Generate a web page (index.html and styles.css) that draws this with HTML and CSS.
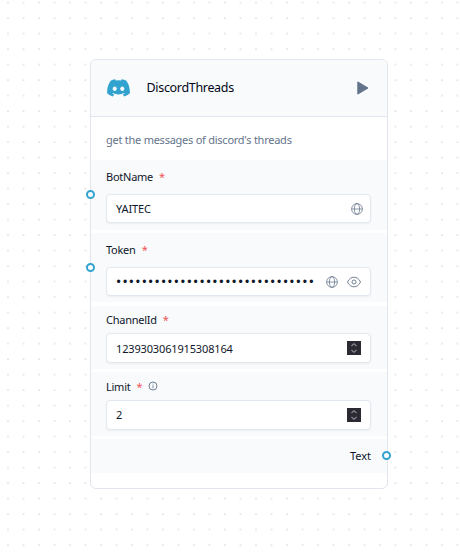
FILE: index.html
```html
<!DOCTYPE html>
<html lang="en">
<head>
<meta charset="utf-8">
<title>DiscordThreads</title>
<link rel="stylesheet" href="styles.css">
</head>
<body>
<svg class="grid" width="460" height="555" aria-hidden="true">
  <defs>
    <pattern id="dots" x="0.25" y="-5.25" width="15.5" height="15.5" patternUnits="userSpaceOnUse"><circle cx="7.75" cy="7.75" r=".53" fill="#999"/></pattern>
    <symbol id="globe" viewBox="0 0 12 12"><g fill="none" stroke="currentColor" stroke-width=".75"><circle cx="6" cy="6" r="5.400"/><ellipse cx="6" cy="6" rx="2.600" ry="5.400"/><path d="M.6 6h10.800"/></g></symbol>
    <symbol id="steps" viewBox="0 0 14 14"><path fill="#2b2a33" d="M0 0h14v14H0z"/><path fill="none" stroke="#8f8f9d" stroke-width="1.1" d="M4.500 5 7 2.700 9.500 5M4.500 9 7 11.300 9.500 9"/></symbol>
  </defs>
  <rect width="460" height="555" fill="url(#dots)"/>
</svg>
<main class="card">
  <header class="head">
    <svg class="logo" viewBox="0 0 24 19"><path fill="#32a3cf" fill-rule="evenodd" d="M20.300 1.800A19 19 0 0 0 15.400.2l-.7 1.300a18 18 0 0 0-5.400 0L8.600.2a19 19 0 0 0-4.900 1.600C.6 6.400-.3 10.900.1 15.400a20 20 0 0 0 6 3l1.300-2.100-2-1 .5-.4a14 14 0 0 0 12.200 0l.5.4-2 1 1.300 2.100a20 20 0 0 0 6-3c.5-5.200-.9-9.700-3.600-13.600zM8 12.700c-1.200 0-2.200-1.100-2.200-2.400S6.800 7.900 8 7.900s2.200 1.100 2.200 2.400-1 2.400-2.200 2.400zm8 0c-1.200 0-2.200-1.100-2.200-2.400s1-2.400 2.200-2.400 2.200 1.100 2.200 2.400-1 2.400-2.200 2.400z"/></svg>
    <h1 class="title">DiscordThreads</h1>
    <svg class="play" viewBox="0 0 12 14"><path fill="#64748b" stroke="#64748b" stroke-linejoin="round" d="M.8.9 11 7 .8 13.100z"/></svg>
  </header>
  <p class="desc"><span class="t-desc">get the messages of discord's threads</span></p>
  <section class="row bot">
    <i class="port"></i>
    <div class="label"><span class="t-label">BotName</span><b>*</b></div>
    <div class="field"><span class="t-value">YAITEC</span><svg class="ico"><use href="#globe"/></svg></div>
  </section>
  <section class="row token">
    <i class="port"></i>
    <div class="label"><span class="t-label">Token</span><b>*</b></div>
    <div class="field"><span class="secret">•••••••••••••••••••••••••••••••</span><svg class="ico"><use href="#globe"/></svg><svg class="eye" viewBox="0 0 14 12"><g fill="none" stroke="#64748b" stroke-width=".9"><path d="M.5 6C2 2.800 4.300 1.200 7 1.200S12 2.800 13.500 6C12 9.200 9.700 10.800 7 10.800S2 9.200.5 6z"/><circle cx="7" cy="6" r="2"/></g></svg></div>
  </section>
  <section class="row channel">
    <div class="label"><span class="t-label">ChannelId</span><b>*</b></div>
    <div class="field"><span class="t-number">1239303061915308164</span><svg class="steps"><use href="#steps"/></svg></div>
  </section>
  <section class="row limit">
    <div class="label"><span class="t-label">Limit</span><b>*</b><svg class="info" viewBox="0 0 10 10"><circle cx="5" cy="5" r="4" fill="none" stroke="#64748b" stroke-width=".9"/><path d="M5 4.300v3M5 2.600v.9" fill="none" stroke="#64748b" stroke-width=".8"/></svg></div>
    <div class="field"><span class="t-number">2</span><svg class="steps"><use href="#steps"/></svg></div>
  </section>
  <section class="row output"><span class="t-text">Text</span><i class="port"></i></section>
</main>
</body>
</html>
```

FILE: styles.css
```css
* { box-sizing: border-box; }
body {
  margin: 0;
  width: 460px;
  height: 555px;
  padding: 59px 0 0 90px;
  overflow: hidden;
  background: #fff;
  color: #0f172a;
  font: 11px/16px "Noto Sans", "Open Sans", sans-serif;
}
.grid { position: absolute; left: 0; top: 0; }
.card {
  position: relative;
  width: 298px;
  height: 430px;
  border: 1px solid #e2e5ee;
  border-radius: 6px;
  background: #fff;
}
.head {
  display: flex;
  align-items: center;
  height: 57px;
  padding: 0 18px 0 16px;
  border-bottom: 1px solid #e2e5ee;
  border-radius: 5px 5px 0 0;
  background: #f8fafc;
}
.logo { width: 23px; height: 18px; margin-right: 16.5px; }
.title { margin: 0; font-size: 12.5px; font-weight: 400; line-height: 18px; letter-spacing: -.32px; white-space: nowrap; color: #020617; }
.play { width: 12px; height: 14px; margin-left: auto; }
.desc { height: 43px; margin: 0; padding: 15px 15px 0; color: #64748b; white-space: nowrap; }
.row { position: relative; padding: 9px 16px 0 15px; margin-bottom: 3px; background: #f8fafc; }
.bot { height: 70px; }
.token { height: 69px; margin-bottom: 4px; }
.channel { height: 63px; padding-top: 6px; }
.limit { height: 64px; padding-top: 7px; }
.output { display: flex; align-items: center; justify-content: flex-end; height: 34px; margin: 0; padding-top: 0; }
.label { display: flex; align-items: center; height: 16px; margin-bottom: 9px; white-space: nowrap; }
.channel .label { margin-bottom: 5px; }
.limit .label { margin-bottom: 5px; }
.label b { margin-left: 6px; font-weight: 400; color: #f05252; }
.field {
  display: flex;
  align-items: center;
  height: 29px;
  padding: 0 7px 0 9px;
  border: 1px solid #e2e8f0;
  border-radius: 4px;
  background: #fff;
  box-shadow: 0 1px 2px #0000000d;
  white-space: nowrap;
}
.channel .field, .limit .field { height: 30px; padding-right: 9px; }
.channel .t-number { padding-top: 1px; }
.token .field { padding-right: 9px; }
.ico { width: 12px; height: 12px; margin-left: auto; color: #64748b; }
.eye { width: 14px; height: 12px; margin-left: 9px; }
.steps { width: 14px; height: 14px; margin-left: auto; }
.info { width: 10px; height: 10px; margin: -2px 0 0 5px; }
.secret { width: 202px; padding-left: .5px; font: 12px/16px "Liberation Sans", sans-serif; letter-spacing: 2.22px; }
.port {
  position: absolute;
  left: -5px;
  top: 30px;
  width: 9px;
  height: 9px;
  border: 2px solid #32a3cf;
  border-radius: 50%;
  background: #fff;
}
.output .port { left: auto; right: -4px; top: 12px; }
.t-desc { letter-spacing: -.25px; }
.t-number { letter-spacing: -.15px; }
.t-label { letter-spacing: -.25px; }
.t-value { letter-spacing: -.1px; }
```
